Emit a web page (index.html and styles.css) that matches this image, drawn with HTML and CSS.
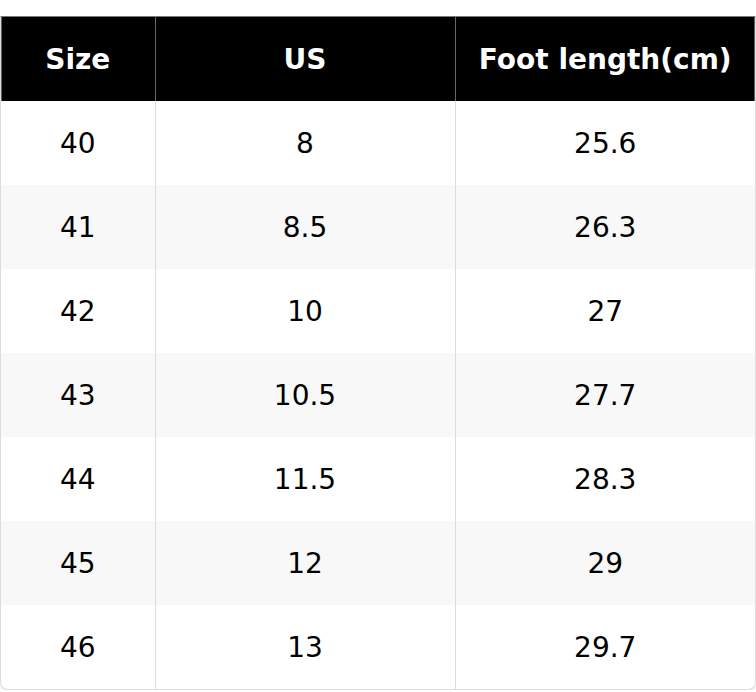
FILE: index.html
```html
<!DOCTYPE html>
<html>
<head>
<meta charset="utf-8">
<link rel="stylesheet" href="styles.css">
</head>
<body>
<div class="wrap">
  <table class="size-table">
    <colgroup>
      <col class="c1"><col class="c2"><col class="c3">
    </colgroup>
    <thead>
      <tr><th>Size</th><th>US</th><th>Foot length(cm)</th></tr>
    </thead>
    <tbody>
      <tr><td>40</td><td>8</td><td>25.6</td></tr>
      <tr><td>41</td><td>8.5</td><td>26.3</td></tr>
      <tr><td>42</td><td>10</td><td>27</td></tr>
      <tr><td>43</td><td>10.5</td><td>27.7</td></tr>
      <tr><td>44</td><td>11.5</td><td>28.3</td></tr>
      <tr><td>45</td><td>12</td><td>29</td></tr>
      <tr><td>46</td><td>13</td><td>29.7</td></tr>
    </tbody>
  </table>
</div>
</body>
</html>
```

FILE: styles.css
```css
html, body {
  margin: 0;
  padding: 0;
  background: #fff;
}
body {
  padding-top: 16px;
  font-family: "DejaVu Sans", sans-serif;
}
.wrap {
  width: 756px;
  box-sizing: border-box;
  border: 1px solid #ddd;
  border-top: 1px solid #777;
  border-radius: 0 0 8px 8px;
  overflow: hidden;
  box-shadow: 0 1px 2px rgba(0,0,0,0.12);
}
.size-table {
  width: 100%;
  border-collapse: collapse;
  table-layout: fixed;
  font-size: 28px;
  color: #000;
}
.c1 { width: 154px; }
.c2 { width: 300px; }
.size-table th,
.size-table td {
  height: 84px;
  padding: 0;
  text-align: center;
  vertical-align: middle;
}
.size-table th {
  background: #000;
  color: #fff;
  font-weight: bold;
  border-left: 1px solid #666;
}
.size-table th:first-child {
  box-shadow: inset 1px 0 0 #666;
}
.size-table th:last-child {
  box-shadow: inset -1px 0 0 #666;
}
.size-table td {
  border-left: 1px solid #ddd;
}
.size-table th:first-child,
.size-table td:first-child {
  border-left: none;
}
.size-table tbody tr:nth-child(even) td {
  background: #f8f8f8;
}
```
